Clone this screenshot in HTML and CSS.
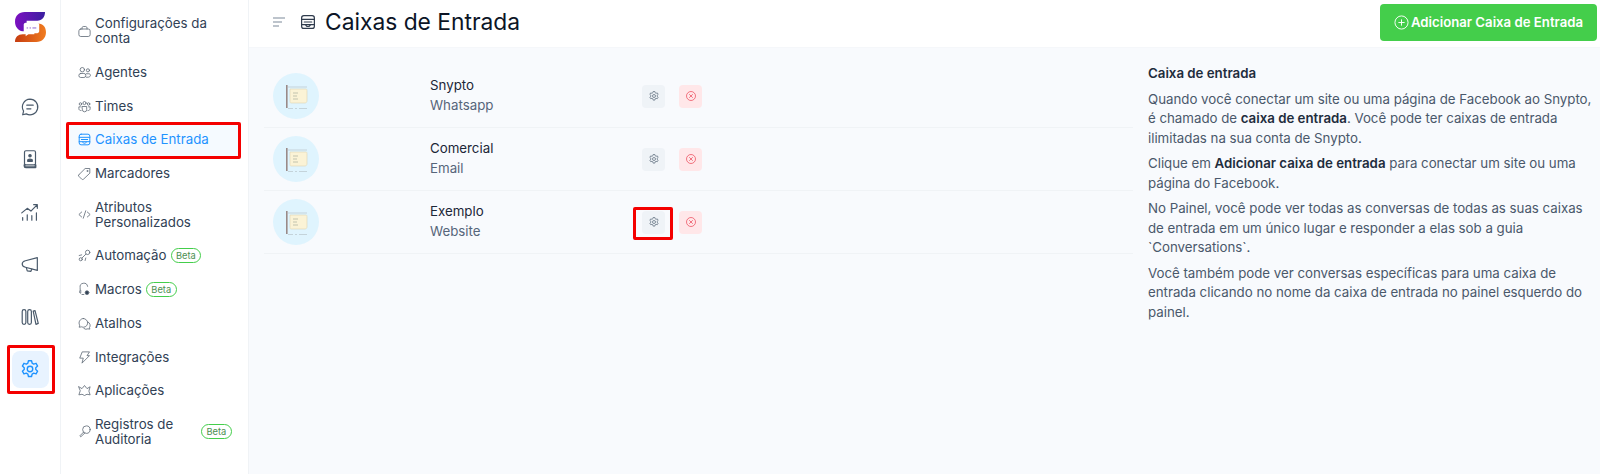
FILE: index.html
```html
<!DOCTYPE html>
<html lang="pt-BR">
<head>
    <meta charset="UTF-8">
    <title>Caixas de Entrada</title>
    <link rel="stylesheet" href="styles.css">
</head>
<body>
    <svg class="sprites" width="0" height="0">
        <symbol id="gear" viewBox="0 0 24 24"><path fill="none" stroke="currentColor" stroke-width="1.5" stroke-linejoin="round" d="M10.300 3h3.400l.6 2.600 1.700 1 2.600-.8 1.700 3-2 1.800v2l2 1.800-1.700 3-2.600-.8-1.700 1-.6 2.600h-3.400l-.6-2.600-1.700-1-2.600.8-1.700-3 2-1.800v-2l-2-1.800 1.700-3 2.600.8 1.700-1z"/><circle cx="12" cy="12" r="3" fill="none" stroke="currentColor" stroke-width="1.5"/></symbol>
        <symbol id="dismiss" viewBox="0 0 24 24"><circle cx="12" cy="12" r="9" fill="none" stroke="currentColor" stroke-width="1.5"/><path fill="none" stroke="currentColor" stroke-width="1.5" stroke-linecap="round" d="M9 9l6 6M15 9l-6 6"/></symbol>
        <symbol id="tray" viewBox="0 0 24 24"><g fill="none" stroke="currentColor" stroke-width="1.6" stroke-linecap="round" stroke-linejoin="round"><rect x="3.500" y="3.500" width="17" height="17" rx="3"/><path d="M3.500 8.500h17M7 12h10M3.500 15.500h17"/><path d="M9 16c.5 1.500 1.500 2 3 2s2.500-.5 3-2"/></g></symbol>
        <symbol id="avatar" viewBox="0 0 46 46"><circle cx="23" cy="23" r="23" fill="#dff4fe"/><rect x="13" y="12" width="1.600" height="23" fill="#9a8a88"/><path d="M15 14h19" stroke="#c4d3da"/><path d="M17 16h16c1 0 1 1 1 2v10c0 1-1 2-2 2H18c-1 0-1-1-1-2z" fill="#fbf3d6" stroke="#ddd5b4" stroke-width=".6"/><path d="M20 20h5M20 23h4M20 26h5" stroke="#b5b6a4" stroke-width=".8"/><path d="M15 35.500h5M22 35.500h2M26 35.500h8" stroke="#c4d3da"/></symbol>
    </svg>

    <div class="app">
        <nav class="rail">
            <svg class="logo" viewBox="0 0 32 31" width="31" height="30">
                <defs>
                    <linearGradient id="logoTop" x1="0" y1="0" x2="1" y2="0"><stop offset="0" stop-color="#7c10c0"/><stop offset="1" stop-color="#3a1fa0"/></linearGradient>
                    <linearGradient id="logoBottom" x1="0" y1="0" x2="1" y2="0"><stop offset="0" stop-color="#c63c10"/><stop offset="1" stop-color="#f07c20"/></linearGradient>
                </defs>
                <path fill="url(#logoTop)" d="M10 0h21c0 5-3 9-8 9H12v11H8c-5-1-8-5-8-10C0 4 4 0 10 0z"/>
                <path fill="url(#logoBottom)" d="M0 31c0-5 3-8 8-8h12V12h4c5 0 8 4 8 9 0 6-4 10-10 10z"/>
                <path fill="#fff" d="M11 11h12c1 0 2 1 2 2v7c0 1-1 2-2 2h-8l-4 3v-3c-1 0-2-1-2-2v-7c0-1 1-2 2-2z"/>
                <path d="M12 16.500h1.500M15 16.500h1.500M18 16.500h4" stroke="#8a5fd0" stroke-width="1"/>
            </svg>
            <div class="rail-icons">
                <a class="rail-item"><svg viewBox="0 0 24 24"><path d="M12 3.500a8.500 8.500 0 1 1-4 16l-4 1 1-4a8.500 8.500 0 0 1 7-13z"/><path d="M8.500 10h7M8.500 14h4.500"/></svg></a>
                <a class="rail-item"><svg viewBox="0 0 24 24"><rect x="6" y="3" width="12" height="15.500" rx="1.500"/><path d="M6 18.500v1c0 .8.700 1.500 1.500 1.500H18v-2.500" stroke-width="2"/><circle cx="12" cy="8.500" r="1.300" fill="currentColor"/><path d="M9.500 14.500h5v-1c0-.8-.8-1.300-2.500-1.300s-2.500 .5-2.500 1.300z" fill="currentColor"/></svg></a>
                <a class="rail-item"><svg viewBox="0 0 24 24"><path d="M3 13l6-5 4 3 7-7M16 4h4v4M4 21v-3M9 21v-6M14 21v-5M19 21v-8"/></svg></a>
                <a class="rail-item"><svg viewBox="0 0 24 24"><path d="M20 5v14L7 15.500c-2-.5-3.500-1.500-3.500-3.500S5 9 7 8.500z"/><path d="M8 16l1 3.500 4 .5 1-2.500"/></svg></a>
                <a class="rail-item"><svg viewBox="0 0 24 24"><rect x="3.500" y="4" width="4" height="16" rx="2"/><rect x="9.500" y="4" width="4" height="16" rx="2"/><path d="M15.500 5.500l2-.5 3.500 14-2.500 1z"/></svg></a>
                <a class="rail-item active"><svg viewBox="0 0 24 24"><use href="#gear"/></svg></a>
            </div>
        </nav>

        <aside class="sidebar">
            <a class="side-item"><svg viewBox="0 0 24 24"><rect x="3" y="8" width="18" height="12" rx="3"/><path d="M8 8V6c0-1 1-2 2-2h4c1 0 2 1 2 2v2"/></svg><span class="side-label">Configurações da conta</span></a>
            <a class="side-item"><svg viewBox="0 0 24 24"><circle cx="8.500" cy="7.500" r="3.500"/><circle cx="17.500" cy="8.500" r="2.500"/><rect x="3" y="13.500" width="11" height="6.500" rx="3"/><path d="M15 14h4c1.500 0 2.500 1 2.500 2.500S20 19.500 18 19.500h-3"/></svg><span class="side-label">Agentes</span></a>
            <a class="side-item"><svg viewBox="0 0 24 24"><circle cx="12" cy="6.500" r="2.500"/><circle cx="5.500" cy="8" r="2"/><circle cx="18.500" cy="8" r="2"/><path d="M8.500 12h7v5a3.500 3.500 0 0 1-7 0zM5.500 12.500H3v3c0 2 1.500 3 3.500 3M18.500 12.500H21v3c0 2-1.500 3-3.500 3"/></svg><span class="side-label">Times</span></a>
            <a class="side-item selected"><svg viewBox="0 0 24 24"><use href="#tray"/></svg><span class="side-label">Caixas de Entrada</span></a>
            <a class="side-item"><svg viewBox="0 0 24 24"><path d="M3 14L13 4h7.500v7.500l-10 9.500c-1 .8-2 .8-3 0l-4.500-4.500c-.8-.8-.8-2 0-2.500z"/><circle cx="16.500" cy="8" r=".8"/></svg><span class="side-label">Marcadores</span></a>
            <a class="side-item"><svg viewBox="0 0 24 24"><path d="M7.500 8L3 12l4.500 4M16.500 8l4.500 4-4.500 4M14 6l-4 12"/></svg><span class="side-label">Atributos Personalizados</span></a>
            <a class="side-item"><svg viewBox="0 0 24 24"><circle cx="6" cy="18" r="2.500"/><circle cx="17" cy="7" r="3.500"/><path d="M8 16l6-6M3.500 12l4-1M13 20l1-4"/></svg><span class="side-label">Automação</span><span class="beta">Beta</span></a>
            <a class="side-item"><svg viewBox="0 0 24 24"><path d="M5 12V9a6 6 0 0 1 12-2M4 14.500c0-1 1-1.500 2-1.500v5c-1 0-2-.5-2-1.500zM8 20h3"/><circle cx="16" cy="17" r="3" fill="currentColor"/></svg><span class="side-label">Macros</span><span class="beta">Beta</span></a>
            <a class="side-item"><svg viewBox="0 0 24 24"><path d="M10 4a7 7 0 1 1-3 13.300L3.500 18l.8-3.300A7 7 0 0 1 10 4z"/><path d="M17.500 9.500a6 6 0 0 1 2.500 9l.5 2.500-3-.5a6 6 0 0 1-6.500-.5"/></svg><span class="side-label">Atalhos</span></a>
            <a class="side-item"><svg viewBox="0 0 24 24"><path d="M9 3h11l-4 6h4L8 21l2-8H5z"/></svg><span class="side-label">Integrações</span></a>
            <a class="side-item"><svg viewBox="0 0 24 24"><path d="M3 6l5 3 4-5 4 5 5-3-2 7 2 6-5-1-4 2-4-2-5 1 2-6z"/></svg><span class="side-label">Aplicações</span></a>
            <a class="side-item"><svg viewBox="0 0 24 24"><circle cx="15" cy="9" r="6"/><path d="M10.500 13l-6 6 1.500 1.500 6.500-6"/></svg><span class="side-label wide">Registros de Auditoria</span><span class="beta">Beta</span></a>
        </aside>

        <div class="page">
            <header class="topbar">
                <svg class="menu-icon" viewBox="0 0 12 10" width="12" height="10"><path d="M0 1h12M0 5h9M0 9h6"/></svg>
                <svg class="title-icon" width="18" height="18"><use href="#tray"/></svg>
                <h1 class="page-title">Caixas de Entrada</h1>
                <button class="add-btn">
                    <svg viewBox="0 0 24 24" width="15" height="15"><circle cx="12" cy="12" r="10.500"/><path d="M12 7v10M7 12h10"/></svg>
                    Adicionar Caixa de Entrada
                </button>
            </header>

            <main class="content">
                <section class="inbox-list">
                    <div class="inbox-row">
                        <svg class="avatar"><use href="#avatar"/></svg>
                        <div class="inbox-info"><div class="inbox-name">Snypto</div><div class="inbox-type">Whatsapp</div></div>
                        <div class="inbox-actions">
                            <button class="icon-btn gear-btn"><svg><use href="#gear"/></svg></button>
                            <button class="icon-btn del-btn"><svg><use href="#dismiss"/></svg></button>
                        </div>
                    </div>
                    <div class="inbox-row">
                        <svg class="avatar"><use href="#avatar"/></svg>
                        <div class="inbox-info"><div class="inbox-name">Comercial</div><div class="inbox-type">Email</div></div>
                        <div class="inbox-actions">
                            <button class="icon-btn gear-btn"><svg><use href="#gear"/></svg></button>
                            <button class="icon-btn del-btn"><svg><use href="#dismiss"/></svg></button>
                        </div>
                    </div>
                    <div class="inbox-row">
                        <svg class="avatar"><use href="#avatar"/></svg>
                        <div class="inbox-info"><div class="inbox-name">Exemplo</div><div class="inbox-type">Website</div></div>
                        <div class="inbox-actions">
                            <button class="icon-btn gear-btn"><svg><use href="#gear"/></svg></button>
                            <button class="icon-btn del-btn"><svg><use href="#dismiss"/></svg></button>
                        </div>
                    </div>
                </section>

                <section class="help">
                    <p class="help-title">Caixa de entrada</p>
                    <p>Quando você conectar um site ou uma página de Facebook ao Snypto, é chamado de <b>caixa de entrada</b>. Você pode ter caixas de entrada ilimitadas na sua conta de Snypto.</p>
                    <p>Clique em <b>Adicionar caixa de entrada</b> para conectar um site ou uma página do Facebook.</p>
                    <p>No Painel, você pode ver todas as conversas de todas as suas caixas de entrada em um único lugar e responder a elas sob a guia `Conversations`.</p>
                    <p>Você também pode ver conversas específicas para uma caixa de entrada clicando no nome da caixa de entrada no painel esquerdo do painel.</p>
                </section>
            </main>
        </div>
    </div>

    <!-- red annotation boxes drawn on top of the screenshot -->
    <div class="mark mark-rail"></div>
    <div class="mark mark-side"></div>
    <div class="mark mark-gear"></div>
</body>
</html>
```

FILE: styles.css
```css
* {
    box-sizing: border-box;
}
html, body {
    margin: 0;
    height: 474px;
    overflow: hidden;
}
body {
    font-family: Inter, "Noto Sans", sans-serif;
    font-size: 13.300px;
    color: #2f3b4c;
    background: #fff;
    position: relative;
}
.sprites {
    position: absolute;
}
.app {
    display: flex;
    height: 474px;
}

/* icon rail */
.rail {
    width: 61px;
    flex: none;
    border-right: 1px solid #f0f3f6;
    display: flex;
    flex-direction: column;
    align-items: center;
    padding-top: 12px;
}
.logo {
    display: block;
}
.rail-icons {
    margin-top: 46px;
    display: flex;
    flex-direction: column;
    gap: 15.600px;
}
.rail-item {
    width: 37px;
    height: 37px;
    border-radius: 8px;
    display: flex;
    align-items: center;
    justify-content: center;
    color: #4a5a6b;
}
.rail-item svg {
    width: 22px;
    height: 22px;
    fill: none;
    stroke: currentColor;
    stroke-width: 1.300;
    stroke-linecap: round;
    stroke-linejoin: round;
}
.rail-item.active {
    background: #e8f3ff;
    color: #1f93ff;
}

/* second sidebar */
.sidebar {
    width: 188px;
    flex: none;
    border-right: 1px solid #f0f3f6;
    padding: 7px 8px 0 6px;
}
.side-item {
    display: flex;
    align-items: center;
    padding: 9.350px 0 9.350px 10px;
    border-radius: 4px;
    line-height: 15px;
    color: #314155;
}
.side-item svg {
    width: 15px;
    height: 15px;
    flex: none;
    margin-right: 3px;
    fill: none;
    stroke: #5f6a76;
    stroke-width: 1.300;
    stroke-linecap: round;
    stroke-linejoin: round;
}
.side-item.selected {
    background: #f5faff;
    color: #1f93ff;
}
.side-item.selected svg {
    stroke: #1f93ff;
    color: #1f93ff;
}
.side-label.wide {
    width: 102px;
}
.beta {
    margin-left: 4px;
    height: 15px;
    padding: 0 4.500px;
    border: 1px solid #44ce4b;
    border-radius: 8px;
    font-size: 9.300px;
    line-height: 13px;
    color: #4c8f52;
}

/* header */
.page {
    flex: 1;
    min-width: 0;
}
.topbar {
    height: 48px;
    display: flex;
    align-items: center;
    padding: 0 3px 3px 24px;
    border-bottom: 1px solid #f5f7fa;
}
.menu-icon {
    fill: none;
    stroke: #7c8a99;
    stroke-width: 1.200;
    margin-right: 14px;
}
.title-icon {
    color: #2f3b4c;
    margin-right: 8px;
}
.page-title {
    margin: 0 0 2px;
    font-size: 22.800px;
    font-weight: 400;
    color: #0c1526;
}
.add-btn {
    margin-left: auto;
    width: 217px;
    height: 37px;
    border: 0;
    border-radius: 4px;
    background: #44ce4b;
    color: #fff;
    font: 600 13.200px Inter, sans-serif;
    display: flex;
    align-items: center;
    justify-content: center;
    gap: 2px;
}
.add-btn svg {
    fill: none;
    stroke: #fff;
    stroke-width: 1.500;
}

/* inbox list */
.content {
    height: 426px;
    background: #f8fafd;
    display: flex;
    padding: 16px 0 0 15px;
}
.inbox-list {
    width: 869px;
    flex: none;
    padding-top: 1px;
}
.inbox-row {
    height: 63px;
    display: grid;
    grid-template-columns: 157px 212px auto;
    align-items: center;
    padding-left: 9px;
    border-bottom: 1px solid #f0f3f6;
}
.avatar {
    width: 46px;
    height: 46px;
}
.inbox-info {
    margin-top: -2px;
}
.inbox-name {
    line-height: 20px;
    color: #1c2738;
}
.inbox-type {
    line-height: 20px;
    color: #56657a;
}
.inbox-actions {
    display: flex;
    gap: 14px;
}
.icon-btn {
    width: 23px;
    height: 23px;
    border: 0;
    border-radius: 4px;
    padding: 0;
    display: flex;
    align-items: center;
    justify-content: center;
}
.icon-btn svg {
    width: 12px;
    height: 12px;
}
.gear-btn {
    background: #eff3f7;
    color: #5d6d7e;
}
.del-btn {
    background: #ffe7e9;
    color: #ec4c5c;
}

/* help text */
.help {
    margin-left: 15px;
    width: 446px;
    line-height: 19.500px;
    letter-spacing: -.02px;
    color: #4a586b;
}
.help p {
    margin: 0 0 6px;
}
.help b {
    font-weight: 600;
    color: #1f2d3d;
}
.help .help-title {
    font-weight: 600;
    color: #1f2d3d;
}

/* annotations */
.mark {
    position: absolute;
    border: 3px solid #f40000;
    border-radius: 2px;
}
.mark-rail {
    left: 7px;
    top: 345px;
    width: 48px;
    height: 49px;
}
.mark-side {
    left: 66px;
    top: 122px;
    width: 175px;
    height: 37px;
}
.mark-gear {
    left: 633px;
    top: 207px;
    width: 40px;
    height: 33px;
}
```
